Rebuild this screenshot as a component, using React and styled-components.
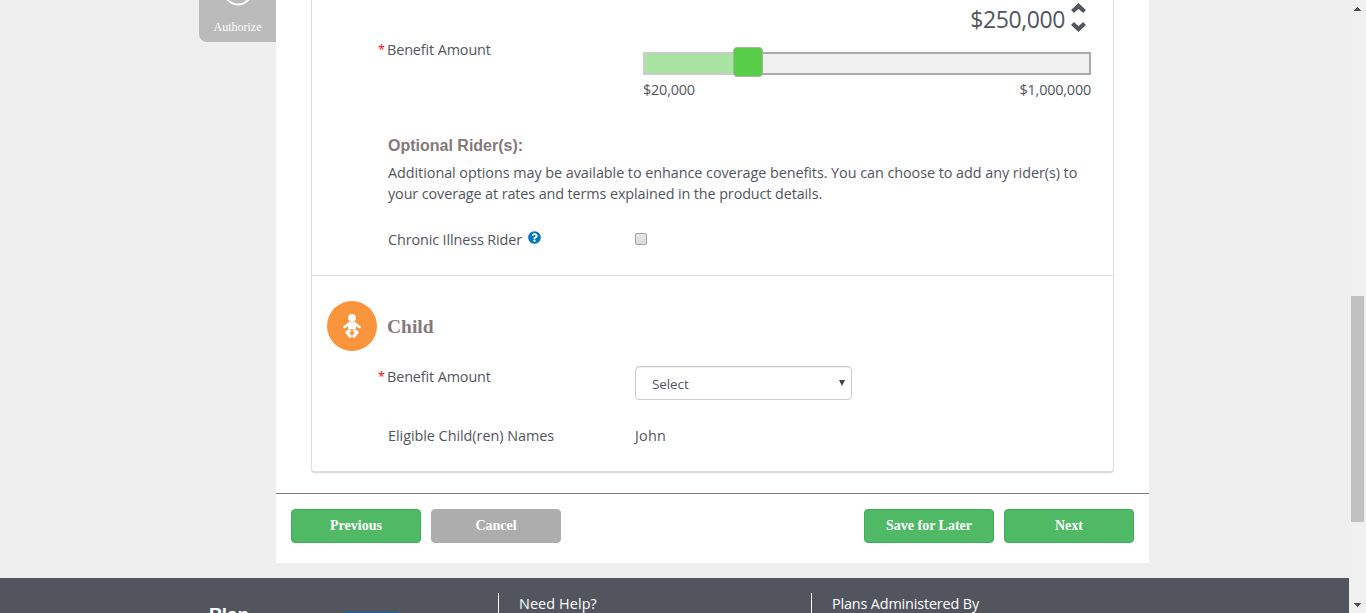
import React from "react";
import styled, { createGlobalStyle } from "styled-components";
import { FaQuestionCircle } from "react-icons/fa";

const GlobalStyle = createGlobalStyle`
  * { box-sizing: border-box; }
  body {
    margin: 0;
    overflow: hidden;
    background: #efefef;
    color: #52555d;
    font-family: "Open Sans", "Noto Sans", sans-serif;
    font-size: 14.4px;
    line-height: 21px;
  }
`;

const Window = styled.div`
  display: flex;
  width: 1366px;
  height: 613px;
  overflow: hidden;
`;

const Page = styled.div`
  display: flex;
  flex-direction: column;
  width: 1349px;
`;

const Main = styled.main`
  display: flex;
  align-items: flex-start;
  height: 578px;
  padding-left: 199px;
`;

const StepTab = styled.div`
  display: flex;
  flex-direction: column;
  align-items: center;
  width: 77px;
  height: 42px;
  background: #bbb;
  border-bottom-left-radius: 8px;
  color: #fff;
  font: 12px/14px "Liberation Serif", serif;
`;

const StepCircle = styled.svg`
  display: block;
  width: 32px;
  height: 20px;
`;

const Panel = styled.section`
  width: 873px;
  height: 563px;
  background: #fff;
`;

const Card = styled.div`
  height: 473px;
  margin: 0 35px 20px;
  border: solid #ddd;
  border-width: 0 1px 2px;
  border-radius: 0 0 4px 4px;
  box-shadow: 0 1px 1px rgba(0, 0, 0, 0.05);
`;

const Section = styled.div`
  padding: 0 22px 0 15px;
  height: ${(p) => p.$height}px;
  border-bottom: ${(p) => (p.$divided ? "1px solid #ddd" : "0")};
`;

const Row = styled.div`
  display: flex;
  align-items: flex-start;
  padding-left: 61px;
  margin-top: ${(p) => p.$top || 0}px;
`;

const Label = styled.div`
  display: flex;
  align-items: center;
  flex: none;
  width: 247px;
  height: 21px;
  margin-top: ${(p) => p.$top || 0}px;
  letter-spacing: ${(p) => p.$spacing || 0}px;
  white-space: nowrap;
`;

const Required = styled.span`
  width: 9px;
  margin-left: -10px;
  color: #f00;
  font-size: 12.5px;
  letter-spacing: 0;
`;

const SliderField = styled.div`
  width: 448px;
  margin-left: 8px;
`;

const AmountLine = styled.div`
  display: flex;
  justify-content: flex-end;
  align-items: flex-start;
  height: 52px;
  padding-right: 5px;
`;

const Amount = styled.span`
  margin-right: 6px;
  font-size: 23px;
  line-height: 38px;
  letter-spacing: -0.4px;
`;

const Stepper = styled.svg`
  width: 15px;
  height: 29px;
  margin-top: 3px;
  fill: none;
  stroke: #52555d;
  stroke-width: 4;
`;

const Track = styled.div`
  display: flex;
  align-items: center;
  width: 448px;
  height: 23px;
  background: #f1f1f1;
  border: 2px solid #aaa;
`;

const Range = styled.div`
  flex: none;
  width: 100px;
  height: 23px;
  margin-left: -2px;
  background: #a8e3a2;
  border: 2px solid #cbcbcb;
  border-right: 0;
`;

const Thumb = styled.div`
  flex: none;
  width: 30px;
  height: 30px;
  margin: -7px 0 -4px -10px;
  background: #58cd4a;
  border: 1px solid #a6b8a4;
  border-radius: 4px;
`;

const Limits = styled.div`
  display: flex;
  justify-content: space-between;
  margin-top: 4px;
  letter-spacing: -0.18px;
`;

const RiderTitle = styled.h3`
  margin: 36px 0 0 61px;
  color: #85787b;
  font: bold 16px/20px "Liberation Sans", sans-serif;
`;

const Paragraph = styled.p`
  margin: 6px 0 0 61px;
  white-space: nowrap;
`;

const Line = styled.span`
  display: block;
  letter-spacing: ${(p) => p.$spacing}px;
`;

const HelpIcon = styled(FaQuestionCircle)`
  width: 13px;
  height: 13px;
  margin: -4px 0 0 6px;
  color: #0077c0;
`;

const Checkbox = styled.span`
  width: 12px;
  height: 12px;
  margin-top: 4px;
  border: 1px solid #a3a3a3;
  border-radius: 2px;
  background: linear-gradient(#e8e8e8, #d9d9d9);
`;

const PersonHeader = styled.div`
  display: flex;
  align-items: center;
  height: 50px;
  margin-top: 25px;
`;

const Avatar = styled.div`
  display: flex;
  align-items: center;
  justify-content: center;
  width: 50px;
  height: 50px;
  margin-right: 10px;
  background: #fa943d;
  border-radius: 50%;
`;

const BabyIcon = styled.svg`
  width: 18px;
  height: 24px;
  fill: #fff;
  stroke: #fff;
  stroke-linecap: round;
  stroke-linejoin: round;
`;

const PersonTitle = styled.h2`
  margin: 1px 0 0;
  color: #85787b;
  font: bold 19.5px/24px "Liberation Serif", serif;
`;

const SelectBox = styled.div`
  display: flex;
  align-items: center;
  justify-content: space-between;
  width: 217px;
  height: 34px;
  padding: 2px 6px 0 16px;
  border: 1px solid #ccc;
  border-radius: 4px;
  box-shadow: inset 0 1px 1px rgba(0, 0, 0, 0.075);
  font-size: 13.5px;
  letter-spacing: -0.1px;
`;

const SelectArrow = styled.svg`
  width: 6px;
  height: 6px;
  margin-top: -3px;
  fill: #444;
`;

const Actions = styled.div`
  display: flex;
  gap: 10px;
  padding: 15px 15px 0;
  border-top: 1px solid #85787b;
`;

const Button = styled.button`
  width: 130px;
  height: 34px;
  padding: 0;
  margin-left: ${(p) => (p.$pushed ? "auto" : "0")};
  background: ${(p) => (p.$muted ? "#adadad" : "#4fb965")};
  border: 1px solid ${(p) => (p.$muted ? "#adadad" : "#3eae56")};
  border-radius: 4px;
  color: #fff;
  font: bold 14px/20px "Liberation Serif", serif;
`;

const Footer = styled.footer`
  display: flex;
  height: 35px;
  padding: 15px 0 0 209px;
  overflow: hidden;
  background: #52555d;
  color: #fff;
`;

const FooterBrand = styled.div`
  display: flex;
  align-items: flex-start;
  width: 289px;
  padding-top: 12px;
  font: bold 19px/20px "Liberation Sans", sans-serif;
`;

const BrandName = styled.span`
  width: 134px;
`;

const BrandMark = styled.span`
  width: 56px;
  height: 20px;
  margin-top: 7px;
  background: #0a63b4;
  border-radius: 2px;
`;

const FooterColumn = styled.div`
  width: 313px;
  height: 40px;
  padding-left: 20px;
  border-left: 1px solid #fff;
  letter-spacing: ${(p) => p.$spacing}px;
  white-space: nowrap;
`;

const Scrollbar = styled.div`
  display: flex;
  flex-direction: column;
  align-items: center;
  width: 17px;
  height: 613px;
  padding: 7px 0 6px;
  background: #f0f0f0;
`;

const ScrollArrow = styled.svg`
  width: 7px;
  height: 4px;
  fill: #505050;
`;

const ScrollThumb = styled.div`
  width: 13px;
  height: 226px;
  margin: 285px 0 auto;
  background: #c1c1c1;
`;

export default function App() {
  return (
    <Window>
      <GlobalStyle />
      <Page>
        <Main>
          <StepTab>
            <StepCircle viewBox="0 0 32 20">
              <circle cx="16" cy="-9" r="13.5" fill="none" stroke="#fff" strokeWidth="2" />
            </StepCircle>
            Authorize
          </StepTab>
          <Panel>
            <Card>
              <Section $height={276} $divided>
                <Row>
                  <Label $top={39} $spacing={-0.12}>
                    <Required>*</Required>Benefit Amount
                  </Label>
                  <SliderField>
                    <AmountLine>
                      <Amount>$250,000</Amount>
                      <Stepper viewBox="0 0 14 28">
                        <path d="M1.2 8.2 7 2.8l5.8 5.4M1.2 19.8 7 25.2l5.8-5.4" />
                      </Stepper>
                    </AmountLine>
                    <Track>
                      <Range />
                      <Thumb />
                    </Track>
                    <Limits>
                      <span>$20,000</span>
                      <span>$1,000,000</span>
                    </Limits>
                  </SliderField>
                </Row>
                <RiderTitle>Optional Rider(s):</RiderTitle>
                <Paragraph>
                  <Line $spacing={-0.055}>
                    Additional options may be available to enhance coverage benefits. You can choose to add any rider(s) to
                  </Line>
                  <Line $spacing={-0.11}>
                    your coverage at rates and terms explained in the product details.
                  </Line>
                </Paragraph>
                <Row $top={25}>
                  <Label $spacing={-0.12}>
                    Chronic Illness Rider <HelpIcon />
                  </Label>
                  <Checkbox />
                </Row>
              </Section>
              <Section $height={195}>
                <PersonHeader>
                  <Avatar>
                    <BabyIcon viewBox="0 0 18 24">
                      <circle cx="9" cy="3.9" r="3.9" stroke="none" />
                      <path d="M6 9.3h6v5H6z" strokeWidth="2" />
                      <path d="M6 9.6 1.5 13.2M12 9.6l4.5 3.6" strokeWidth="2.6" />
                      <path
                        d="M6.6 16.9 3.9 18.3l3.2 3.9M11.4 16.9l2.7 1.4-3.2 3.9"
                        fill="none"
                        strokeWidth="3.2"
                      />
                    </BabyIcon>
                  </Avatar>
                  <PersonTitle>Child</PersonTitle>
                </PersonHeader>
                <Row $top={15}>
                  <Label $spacing={-0.12}>
                    <Required>*</Required>Benefit Amount
                  </Label>
                  <SelectBox>
                    Select
                    <SelectArrow viewBox="0 0 6 6">
                      <path d="M0 0h6L3 6z" />
                    </SelectArrow>
                  </SelectBox>
                </Row>
                <Row $top={25}>
                  <Label $spacing={-0.04}>Eligible Child(ren) Names</Label>
                  <Label $spacing={0.2}>John</Label>
                </Row>
              </Section>
            </Card>
            <Actions>
              <Button>Previous</Button>
              <Button $muted>Cancel</Button>
              <Button $pushed>Save for Later</Button>
              <Button>Next</Button>
            </Actions>
          </Panel>
        </Main>
        <Footer>
          <FooterBrand>
            <BrandName>Plan</BrandName>
            <BrandMark />
          </FooterBrand>
          <FooterColumn $spacing={0.1}>Need Help?</FooterColumn>
          <FooterColumn $spacing={-0.15}>Plans Administered By</FooterColumn>
        </Footer>
      </Page>
      <Scrollbar>
        <ScrollArrow viewBox="0 0 7 4">
          <path d="M3 0h1v1h1v1h1v1h1v1H0V3h1V2h1V1h1z" />
        </ScrollArrow>
        <ScrollThumb />
        <ScrollArrow viewBox="0 0 7 4">
          <path d="M3 4h1V3h1V2h1V1h1V0H0v1h1v1h1v1h1z" />
        </ScrollArrow>
      </Scrollbar>
    </Window>
  );
}
